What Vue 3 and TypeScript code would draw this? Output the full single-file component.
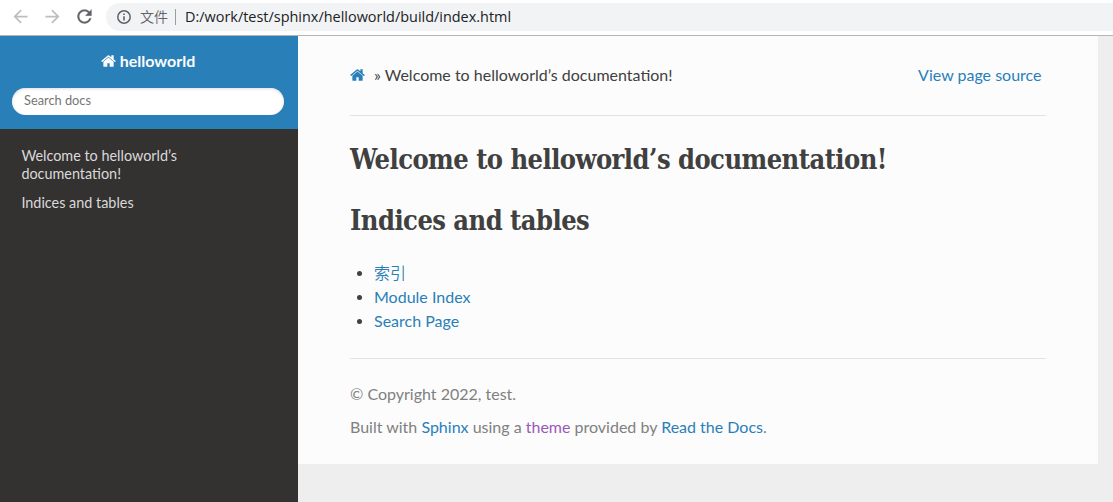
<script setup lang="ts">
interface Link {
  label: string
  cjk?: boolean
}

const url: string = 'D:/work/test/sphinx/helloworld/build/index.html'
const toc: string[] = ['Welcome to helloworld’s documentation!', 'Indices and tables']
const links: Link[] = [
  { label: '索引', cjk: true },
  { label: 'Module Index' },
  { label: 'Search Page' },
]
const homePath: string =
  'M1408 992v480q0 26-19 45t-45 19H960v-384H704v384H320q-26 0-45-19t-19-45V992q0-1 .5-3t.5-3l575-474 575 474q1 2 1 6zm223-69l-62 74q-8 9-21 11h-3q-13 0-21-7L832 424 140 1001q-12 8-24 7-13-2-21-11l-62-74q-8-10-7-23.5T37 878l719-599q32-26 76-26t76 26l244 204V288q0-14 9-23t23-9h192q14 0 23 9t9 23v408l219 182q10 8 11 21.5t-7 23.5z'
</script>

<template>
  <div class="window">
    <header class="toolbar">
      <svg class="nav-icon faded" viewBox="0 0 24 24"><path d="M20 11H7.83l5.59-5.59L12 4l-8 8 8 8 1.41-1.41L7.83 13H20v-2z" /></svg>
      <svg class="nav-icon faded" viewBox="0 0 24 24"><path d="M12 4l-1.41 1.41L16.17 11H4v2h12.17l-5.58 5.59L12 20l8-8-8-8z" /></svg>
      <svg class="nav-icon" viewBox="0 0 24 24"><path stroke="#5f6368" stroke-width=".3" d="M17.65 6.35C16.2 4.9 14.21 4 12 4c-4.42 0-7.99 3.58-7.99 8s3.57 8 7.99 8c3.73 0 6.84-2.55 7.73-6h-2.08c-.82 2.33-3.04 4-5.65 4-3.31 0-6-2.69-6-6s2.69-6 6-6c1.66 0 3.14.69 4.22 1.78L13 11h7V4l-2.35 2.35z" /></svg>
      <div class="address">
        <svg class="info" viewBox="0 0 14 14">
          <circle cx="7" cy="7" r="6.2" fill="none" stroke="#5f6368" stroke-width="1.5" />
          <path d="M6.2 6.2h1.6v4.3H6.2zM6.2 3.5h1.6V5H6.2z" fill="#5f6368" />
        </svg>
        <span class="scheme">文件</span>
        <span class="divider"></span>
        <span class="url">{{ url }}</span>
      </div>
    </header>

    <div class="page">
      <nav class="sidebar">
        <div class="brand-area">
          <a class="brand">
            <svg class="home" viewBox="0 0 1664 1792"><path :d="homePath" /></svg>
            <span>helloworld</span>
          </a>
          <div class="search">Search docs</div>
        </div>
        <ul class="toc">
          <li v-for="item in toc" :key="item">{{ item }}</li>
        </ul>
      </nav>

      <main class="content">
        <div class="crumbs">
          <div class="trail">
            <svg class="home" viewBox="0 0 1664 1792"><path :d="homePath" /></svg>
            <span>» Welcome to helloworld’s documentation!</span>
          </div>
          <a class="source">View page source</a>
        </div>
        <h1 class="title-main">Welcome to helloworld’s documentation!</h1>
        <h1 class="title-sub">Indices and tables</h1>
        <ul class="links">
          <li v-for="link in links" :key="link.label">
            <a :class="{ cjk: link.cjk }">{{ link.label }}</a>
          </li>
        </ul>
        <footer class="footer">
          <p>© Copyright 2022, test.</p>
          <p>Built with <a>Sphinx</a> using a <a class="visited">theme</a> provided by <a>Read the Docs</a>.</p>
        </footer>
      </main>
    </div>
  </div>
</template>

<style>
body {
  margin: 0;
  overflow: hidden;
}
</style>

<style scoped>
.window {
  width: 1113px;
  height: 502px;
  display: flex;
  flex-direction: column;
  overflow: hidden;
  box-sizing: border-box;
  font-family: Lato, "Noto Sans CJK SC", sans-serif;
  font-size: 16px;
  line-height: 24px;
  color: #404040;
  background: #eee;
}
.toolbar {
  height: 36px;
  flex: none;
  box-sizing: border-box;
  display: flex;
  align-items: center;
  padding: 0 0 2px 10px;
  background: #fff;
  border-bottom: 1px solid #b6b4b6;
}
.nav-icon {
  width: 21px;
  height: 21px;
  margin-right: 11px;
  fill: #5f6368;
  flex: none;
}
.nav-icon.faded {
  fill: #bcbec1;
}
.address {
  flex: 1;
  height: 28px;
  display: flex;
  align-items: center;
  background: #f1f3f4;
  border-radius: 14px 0 0 14px;
  padding-left: 11px;
  margin-top: 1px;
}
.info {
  width: 14px;
  height: 14px;
}
.scheme {
  font-family: "Noto Sans CJK SC", sans-serif;
  font-size: 14px;
  line-height: 22px;
  font-weight: 350;
  color: #5f6368;
  margin-left: 9px;
  margin-top: -2px;
}
.divider {
  width: 1px;
  height: 16px;
  background: #9a9da0;
  margin: 0 9px 0 7px;
}
.url {
  font-family: "Open Sans", sans-serif;
  font-size: 14.44px;
  color: #202124;
  white-space: nowrap;
}
.page {
  flex: 1;
  display: flex;
  align-items: flex-start;
}
.sidebar {
  width: 298px;
  align-self: stretch;
  background: #343131;
}
.brand-area {
  height: 93px;
  box-sizing: border-box;
  background: #2980b9;
  padding: 13px 14px 0 12px;
}
.brand {
  display: flex;
  justify-content: center;
  color: #fcfcfc;
  font-weight: 700;
  gap: 4px;
}
.home {
  width: 15px;
  height: 16px;
  fill: currentColor;
  margin-top: 4px;
}
.search {
  height: 27px;
  box-sizing: border-box;
  margin-top: 15px;
  padding: 0 12px;
  border-radius: 14px;
  background: #fff;
  box-shadow: inset 0 1px 3px #ddd;
  font-size: 12.8px;
  line-height: 25px;
  color: #757575;
}
.toc {
  list-style: none;
  margin: 0;
  padding: 18px 100px 0 21.4px;
  font-size: 14.4px;
  line-height: 18px;
  color: #d9d9d9;
}
.toc li {
  margin-bottom: 11px;
}
.content {
  width: 800px;
  height: 428px;
  box-sizing: border-box;
  padding: 27px 52px 0;
  background: #fcfcfc;
}
.crumbs {
  display: flex;
  justify-content: space-between;
  height: 53px;
  box-sizing: border-box;
  padding-right: 4.5px;
  border-bottom: 1px solid #e1e4e5;
}
.trail {
  display: flex;
  gap: 9px;
}
.trail .home {
  color: #2980b9;
}
a {
  color: #2980b9;
}
.visited {
  color: #9b59b6;
}
.title-main,
.title-sub {
  font-family: "Roboto Slab", "DejaVu Serif Condensed", "DejaVu Serif", serif;
  font-stretch: condensed;
  font-size: 27px;
  font-weight: 700;
  line-height: 36px;
  letter-spacing: -0.53px;
  margin: 26px 0 25px;
  white-space: nowrap;
}
.title-sub {
  margin: 25px 0 22px;
}
.links {
  margin: 0;
  padding: 0 0 0 24px;
}
.links li::marker {
  font-size: 15px;
}
.links .cjk {
  font-family: "Noto Sans CJK SC", sans-serif;
  font-weight: 350;
  line-height: 20px;
}
.footer {
  margin-top: 25px;
  border-top: 1px solid #e1e4e5;
  padding-top: 23px;
  color: #808080;
}
.footer p {
  margin: 0 0 9px;
}
</style>
